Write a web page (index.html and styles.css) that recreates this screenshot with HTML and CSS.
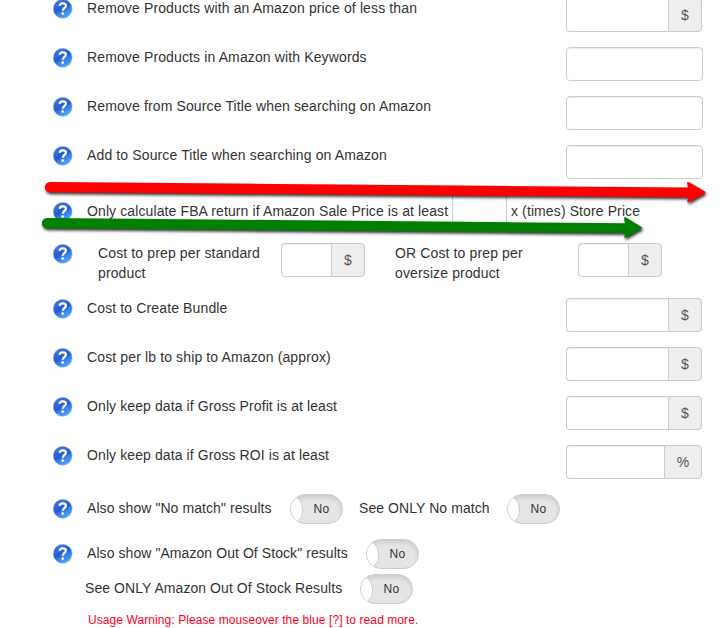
FILE: index.html
```
<!DOCTYPE html>
<html lang="en">
<head>
<meta charset="utf-8">
<title>Product filters</title>
<link rel="stylesheet" href="styles.css">
</head>
<body>
<svg class="defs" aria-hidden="true">
  <defs>
    <linearGradient id="blue" x1="0.25" y1="0" x2="0.8" y2="1">
      <stop offset="0" stop-color="#4678dc"/><stop offset="0.48" stop-color="#245bd0"/><stop offset="0.6" stop-color="#357de5"/><stop offset="1" stop-color="#56b2fc"/>
    </linearGradient>
    <symbol id="help" viewBox="0 0 20 20">
      <circle cx="9.700" cy="9.800" r="9.500" fill="url(#blue)" stroke="#9dbcf0" stroke-width="0.500"/>
      <path d="M6.600 6.800C6.800 5 8 4.300 9.700 4.300C11.700 4.300 12.900 5.200 12.900 6.800C12.900 9 9.900 9 9.800 11.800" fill="none" stroke="#fff" stroke-width="2.300"/>
      <circle cx="9.700" cy="14.600" r="1.400" fill="#fff"/>
    </symbol>
  </defs>
</svg>
<main class="form">
  <div class="row"><svg class="help"><use href="#help"/></svg><label>Remove Products with an Amazon price of less than</label><div class="group"><input type="text"><span class="addon">$</span></div></div>
  <div class="row"><svg class="help"><use href="#help"/></svg><label>Remove Products in Amazon with Keywords</label><div class="group wide"><input type="text"></div></div>
  <div class="row"><svg class="help"><use href="#help"/></svg><label>Remove from Source Title when searching on Amazon</label><div class="group wide"><input type="text"></div></div>
  <div class="row"><svg class="help"><use href="#help"/></svg><label>Add to Source Title when searching on Amazon</label><div class="group wide"><input type="text"></div></div>
  <div class="row times"><svg class="help"><use href="#help"/></svg><label>Only calculate FBA return if Amazon Sale Price is at least</label><input type="text"><span class="after">x (times) Store Price</span></div>
  <div class="row prep"><svg class="help"><use href="#help"/></svg><label>Cost to prep per standard product</label><div class="group small"><input type="text"><span class="addon">$</span></div><label>OR Cost to prep per oversize product</label><div class="group small"><input type="text"><span class="addon">$</span></div></div>
  <div class="row"><svg class="help"><use href="#help"/></svg><label>Cost to Create Bundle</label><div class="group"><input type="text"><span class="addon">$</span></div></div>
  <div class="row"><svg class="help"><use href="#help"/></svg><label>Cost per lb to ship to Amazon (approx)</label><div class="group"><input type="text"><span class="addon">$</span></div></div>
  <div class="row keep"><svg class="help"><use href="#help"/></svg><label>Only keep data if Gross Profit is at least</label><div class="group"><input type="text"><span class="addon">$</span></div></div>
  <div class="row keep"><svg class="help"><use href="#help"/></svg><label>Only keep data if Gross ROI is at least</label><div class="group"><input type="text"><span class="addon percent">%</span></div></div>
  <div class="row switches match"><svg class="help"><use href="#help"/></svg><label>Also show "No match" results</label><span class="toggle">No</span><label class="second">See ONLY No match</label><span class="toggle">No</span></div>
  <div class="row switches stock"><svg class="help"><use href="#help"/></svg><label>Also show "Amazon Out Of Stock" results</label><span class="toggle">No</span></div>
  <div class="row switches only"><label>See ONLY Amazon Out Of Stock Results</label><span class="toggle">No</span></div>
  <p class="warning">Usage Warning: Please mouseover the blue [?] to read more.</p>
</main>
<svg class="arrows" viewBox="0 0 724 628" aria-hidden="true">
  <path class="red" d="M50 182L688 187.6L687 182.6Q687.5 181.5 689 182.2L705 191.5Q706 192.4 705 193.2L689 202Q687 202.600 687.300 201L688.500 197.300L50 192.300A5.100 5.100 0 0 1 50 182Z"/>
  <path class="green" d="M47 218L625 223.300L624 218Q624.500 216.800 626 217.500L641.500 227Q642.500 228 641.500 228.800L626 237.500Q624 238 624.300 236.600L625.500 233L47 228.300A5.100 5.100 0 0 1 47 218Z"/>
</svg>
</body>
</html>
```
FILE: styles.css
```
* { box-sizing: border-box; }
body {
  margin: 0;
  height: 628px;
  overflow: hidden;
  background: #fff;
  color: #333;
  font: 14px/20px "Liberation Sans", Arial, sans-serif;
  letter-spacing: 0.13px;
}
.defs { display: block; width: 0; height: 0; }
.form { margin-top: -2px; padding-left: 53px; }
.row { display: flex; align-items: flex-start; height: 49px; }
.help { flex: none; width: 20px; height: 20px; margin: 1px 14px 0 0; }
label, .after { white-space: nowrap; }
.row > .group { margin-left: auto; margin-right: 22px; }
.row > .group.wide { width: 137px; margin-right: 21px; }
.group { display: flex; flex: none; width: 136px; height: 34px; }
input {
  flex: 1;
  min-width: 0;
  height: 34px;
  padding: 6px 12px;
  border: 1px solid #ccc;
  border-radius: 4px;
  background: #fff;
  box-shadow: inset 0 1px 1px rgba(0, 0, 0, 0.075);
  font: inherit;
}
.group input:not(:last-child) { border-right: 0; border-radius: 4px 0 0 4px; }
.addon {
  flex: none;
  width: 34px;
  border: 1px solid #ccc;
  border-radius: 0 4px 4px 0;
  background: #eee;
  color: #555;
  line-height: 33px;
  text-align: center;
}
.percent { width: 38px; }
.times { letter-spacing: 0.11px; }
.times .help { margin-top: 8px; }
.times label, .times .after { padding-top: 7px; }
.times label { width: 365px; }
.times input { flex: none; width: 55px; border-radius: 0; }
.times .after { margin-left: 4px; }
.keep { letter-spacing: 0.1px; }
.row.prep { height: 55px; }
.prep label { width: 183px; padding-right: 10px; white-space: normal; }
.prep .help { margin-right: 25px; }
.prep .group.small { width: 84px; margin: 0 30px 0 0; }
.prep .small + label { padding-right: 40px; }
.switches { height: 45px; letter-spacing: 0.07px; }
.switches label { padding-top: 4px; }
.switches .help { margin-top: 5px; }
.match label { width: 203px; }
.match .second { width: 148px; margin-left: 16px; }
.stock { height: 35px; }
.stock label { width: 279px; }
.only { height: 35px; padding-left: 32px; }
.only label { width: 275px; }
.toggle {
  position: relative;
  flex: none;
  width: 53px;
  height: 30px;
  padding-left: 10px;
  overflow: hidden;
  border: 1px solid #ccc;
  border-radius: 15px;
  background: #e5e5e5;
  box-shadow: inset 0 3px 4px rgba(0, 0, 0, 0.1);
  font-size: 12px;
  letter-spacing: 0.3px;
  line-height: 28px;
  text-align: center;
}
.toggle::before {
  content: "";
  position: absolute;
  left: -20px;
  top: -1px;
  width: 30px;
  height: 30px;
  border: 1px solid #ccc;
  border-radius: 15px;
  background: #fff;
}
.warning { margin: 1px 0 0 35px; color: #f02; font-size: 12px; letter-spacing: 0.08px; }
.arrows { position: absolute; left: 0; top: 0; width: 724px; height: 628px; pointer-events: none; }
.arrows path { filter: drop-shadow(1px 2px 1.5px rgba(0, 0, 0, 0.8)); }
.red { fill: #f00; }
.green { fill: #008000; }
```
